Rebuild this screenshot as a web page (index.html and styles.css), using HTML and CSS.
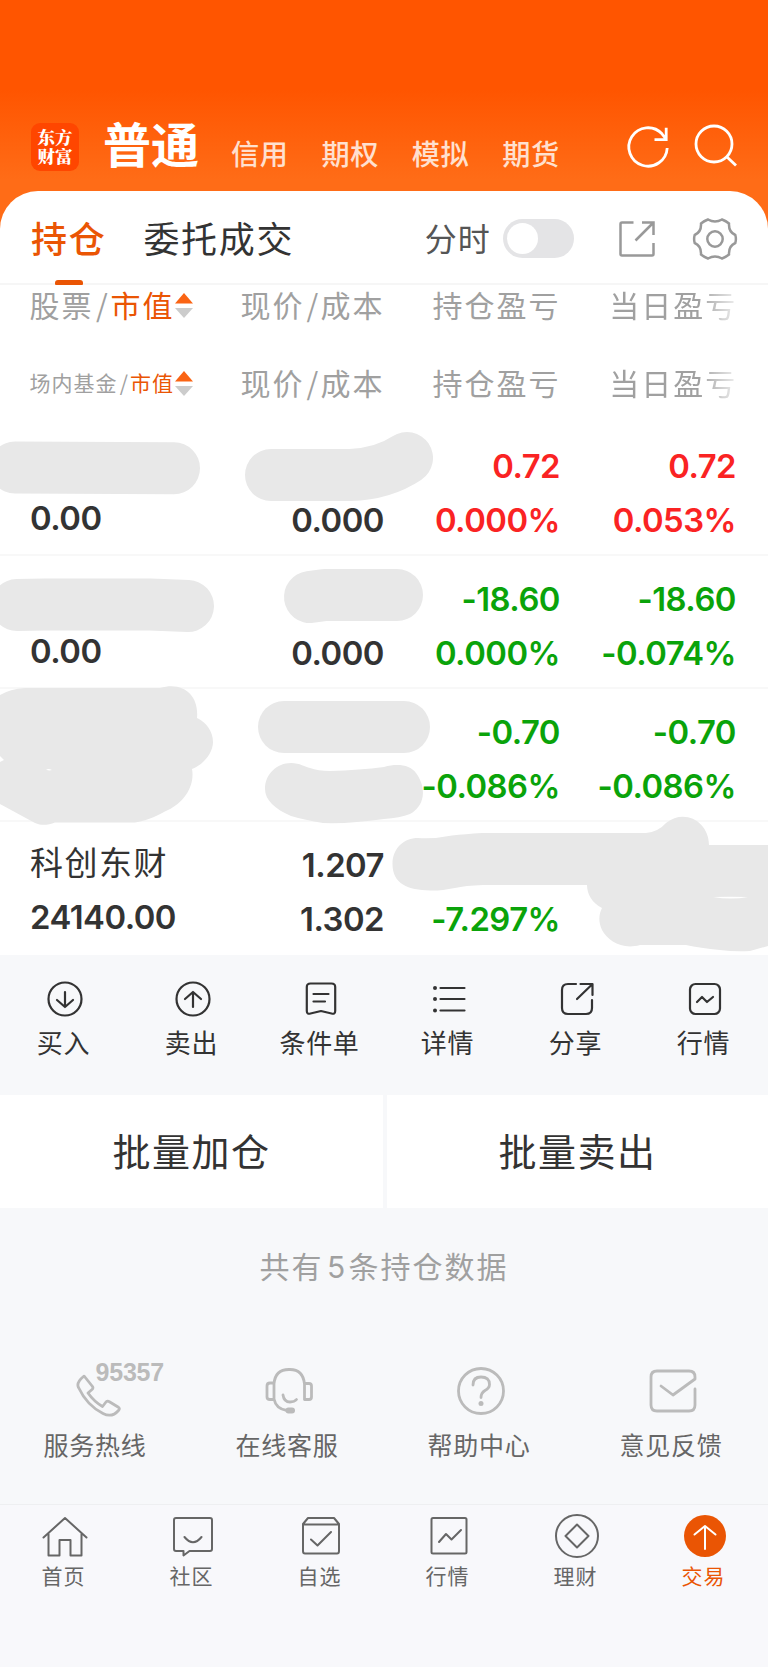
FILE: index.html
```html
<!DOCTYPE html>
<html lang="zh-CN">
<head>
<meta charset="utf-8">
<title>持仓</title>
<link rel="stylesheet" href="styles.css">
</head>
<body>
<div class="app">
  <header class="top">
    <div class="logo"><span>东方</span><span>财富</span></div>
    <h1 class="title">普通</h1>
    <nav class="modes"><span>信用</span><span>期权</span><span>模拟</span><span>期货</span></nav>
    <svg class="top-icon refresh" viewBox="-24 -24 48 48"><path d="M19.2 1A19.2 19.2 0 1 1 14-13.2L18-8M18.2-19.3V-7.3H6.5"/></svg>
    <svg class="top-icon" viewBox="-24 -24 48 48"><circle cx="-2" cy="-3" r="18"/><path d="M11 10L20 18.500"/></svg>
  </header>

  <main class="panel">
    <div class="tabs">
      <span class="tab active">持仓</span>
      <span class="tab">委托成交</span>
      <span class="tick-label">分时</span>
      <span class="switch"></span>
      <svg class="tool share" viewBox="-24 -24 48 48"><path d="M-3.500-16.500H-15Q-16.500-16.500-16.500-15V15Q-16.500 16.500-15 16.500H15Q16.500 16.500 16.500 15V4M5-16.500H16.500V-4M16-16L-1.500 1.500"/></svg>
      <svg class="tool" viewBox="-24 -24 48 48"><path d="M-7-19.500Q0-15.500 7-19.500Q11-18 14-15.500Q13.500-7 20.300-4Q21.500 0 20.300 4Q13.500 7 14 15.500Q11 18 7 19.500Q0 15.500-7 19.500Q-11 18-14 15.500Q-13.500 7-20.300 4Q-21.500 0-20.300-4Q-13.500-7-14-15.500Q-11-18-7-19.500Z"/><circle r="7.700"/></svg>
    </div>

    <div class="thead first">
      <div class="name-col">股票<i>/</i><b>市值</b><svg class="sort" viewBox="0 0 18 26"><path class="up" d="M9 0L18 10.500H0Z"/><path class="down" d="M9 25L18 15H0Z"/></svg></div>
      <div>现价<i>/</i>成本</div><div>持仓盈亏</div><div class="fade">当日盈亏</div>
    </div>
    <div class="thead second">
      <div class="name-col small">场内基金<i>/</i><b>市值</b><svg class="sort" viewBox="0 0 18 26"><path class="up" d="M9 0L18 10.500H0Z"/><path class="down" d="M9 25L18 15H0Z"/></svg></div>
      <div>现价<i>/</i>成本</div><div>持仓盈亏</div><div class="fade">当日盈亏</div>
    </div>

    <div class="holdings">
      <div class="row"><div class="name-col"><span></span><span>0.00</span></div><div><span></span><span>0.000</span></div><div class="rise"><span>0.72</span><span>0.000%</span></div><div class="rise"><span>0.72</span><span>0.053%</span></div></div>
      <div class="row"><div class="name-col"><span></span><span>0.00</span></div><div><span></span><span>0.000</span></div><div class="fall"><span>-18.60</span><span>0.000%</span></div><div class="fall"><span>-18.60</span><span>-0.074%</span></div></div>
      <div class="row"><div class="name-col"></div><div></div><div class="fall"><span>-0.70</span><span>-0.086%</span></div><div class="fall"><span>-0.70</span><span>-0.086%</span></div></div>
      <div class="row"><div class="name-col"><span class="stock">科创东财</span><span>24140.00</span></div><div><span>1.207</span><span>1.302</span></div><div class="fall"><span></span><span>-7.297%</span></div><div></div></div>
      <!-- Brush strokes hiding private figures -->
      <svg class="redact" viewBox="0 423 768 532">
        <g class="brush"><path d="M15 467.500L174 468.200"/><path d="M271 475H350Q383 474 407 458"/><path d="M17 605L45 604.500H150L188 606"/><path d="M310 597L325 595H397"/><path d="M284 727H404"/></g>
        <path d="M0 695Q10 689 25 688H160C185 681 199 697 197 718C206 722 213 731 213 742C213 753 203 765 192 769C195 785 185 802 168 810C158 815 150 820 135 822.500H55C48 825 42 826 35 823L0 804V762L4 760L0 756Z"/>
        <path d="M265 789C265 774 277 763 291 763C300 763 305 767 310 768Q318 771 330 771Q360 770 384 767C398 763 410 765 416 773C427 788 425 806 410 814Q400 818 384 819Q350 824 323 823Q305 820 291 816C275 809 265 800 265 789Z"/>
        <path d="M392.500 864C392.500 848 404 838 418 838Q435 839 452 835.500Q465 834 482 833H646Q658 832 666 823C685 808 709 822 709 845H768V946L750 951Q735 952 720 950Q700 948 686 945H640C622 950 608 941 602 930C598 921 599 914 602 908C592 903 587 894 587 885H483Q465 885.500 455 888Q440 891 430 890.500C408 890 392.500 884 392.500 864Z"/>
        <path class="gap" d="M713 897Q730 896.500 748 897Q731 900 713 897ZM46 769.500Q49 768.500 52 770Q49 771 46 769.500Z"/>
      </svg>
    </div>
  </main>

  <section class="actions">
    <div><svg viewBox="-20 -20 40 40"><circle r="16.500"/><path d="M0-7V8M-8 1L0 8L8 1"/></svg>买入</div>
    <div><svg viewBox="-20 -20 40 40"><circle r="16.500"/><path d="M0 8V-7M-8 0L0-7L8 0"/></svg>卖出</div>
    <div><svg viewBox="-20 -20 40 40"><path d="M-14.200 12V-12Q-14.200-15.500-10.500-15.500H10.500Q14.200-15.500 14.200-12V12Q14.200 15.500 10.500 14.500L0 12L-10.500 14.500Q-14.200 15.500-14.200 12ZM-7.500-5H7.500M-7.500 2.500H4"/></svg>条件单</div>
    <div><svg viewBox="-20 -20 40 40"><path d="M-8.500-11H15.500M-8.500 0H15.500M-8.500 11.500H15.500"/><path class="dots" d="M-14-11H-14M-14 0H-14M-14 11.500H-14"/></svg>详情</div>
    <div><svg viewBox="-20 -20 40 40"><path d="M-1-15H-9Q-15-15-15-9V9Q-15 15-9 15H9Q15 15 15 9V1M3.500-15H15.500V-4M15-14.500L0 0"/></svg>分享</div>
    <div><svg viewBox="-20 -20 40 40"><rect x="-15" y="-15" width="30" height="30" rx="5.500"/><path d="M-8 3L-3-2L2 3L8-2"/></svg>行情</div>
  </section>

  <section class="batch"><div>批量加仓</div><div>批量卖出</div></section>
  <p class="summary">共有<i>5</i>条持仓数据</p>

  <section class="services">
    <div><span class="icon-wrap"><svg viewBox="-30 -26 60 52"><path d="M-11.500-13L-3.500-3Q-2.500-1.500-4 0L-8 3.500Q-2 12 6.500 17L10 12.500Q11.500 11 13 12L22 17.500Q24.500 19 22.500 21Q16 28.500 7 24Q-9 16-17.500-2Q-20-7-12.500-13Q-12-13.500-11.500-13Z" transform="translate(-1 -1.500)"/></svg><em>95357</em></span>服务热线</div>
    <div><svg viewBox="-30 -26 60 52"><path d="M-15-8V-7Q-14-21.500 0-21.500H1Q14-21.500 15.500-7V8.500H20Q22.500 8.500 22.500 6V-5Q22.500-7.500 20-7.500H15.500M-15-8H-19Q-22-8-22-5V6Q-22 8.500-19 8.500H-15V-8M-15 8Q-13 18-2 19.500M-6 4Q-5 11 1 11Q5.500 11 7.500 8.500"/><path class="mic" d="M-.500 19.500H3"/></svg>在线客服</div>
    <div><svg viewBox="-30 -26 60 52"><circle r="22.500"/><path d="M-8-6Q-8-14 0-14Q8.500-14 8.500-6.500Q8.500-3 4-.500Q0 2 0 6.500"/><circle class="dot" cx="0" cy="12.500" r="2.500"/></svg>帮助中心</div>
    <div><svg viewBox="-30 -26 60 52"><path d="M22-2V14Q22 20 16 20H-16Q-22 20-22 14V-14Q-22-20-16-20H16Q22-20 22-14V-12L0 4L-12-5"/></svg>意见反馈</div>
  </section>

  <nav class="bottom">
    <div><svg viewBox="-24 -24 48 48"><path d="M-21.500 1.500L0-18L21.500 1.500M-16.500-2V19.500H-5.500V4H5.500V19.500H16.500V-2"/></svg>首页</div>
    <div><svg viewBox="-24 -24 48 48"><path d="M-17-18H17Q19-18 19-16V13Q19 15 17 15H-3.500L-9.500 19.500V15H-17Q-19 15-19 13V-16Q-19-18-17-18ZM-8.500 1Q0 11.500 8.500 1"/></svg>社区</div>
    <div><svg viewBox="-24 -24 48 48"><path d="M-18-12L-13-18H13L18-12V15Q18 17.500 16 17.500H-16Q-18 17.500-18 15ZM-18-11.500H18M-10 3.500L-3.500 9.500L10-4"/></svg>自选</div>
    <div><svg viewBox="-24 -24 48 48"><rect x="-17.500" y="-18" width="35" height="35.500" rx="1.500"/><path d="M-10 6L-3-2L2.500 3.500L12-6"/></svg>行情</div>
    <div><svg viewBox="-24 -24 48 48"><circle r="21"/><path d="M0-11.500L11.500 0L0 11.500L-11.500 0Z"/></svg>理财</div>
    <div class="current"><svg viewBox="-24 -24 48 48"><circle r="21"/><path d="M0 13V-9.500M-10.500-1.500L0-10L10.500-1.500"/></svg>交易</div>
  </nav>
</div>
</body>
</html>
```
FILE: styles.css
```css
* { box-sizing: border-box; }
body { margin: 0; background: #f7f8fa; font-family: "Noto Sans CJK SC", sans-serif; color: #333; }
i, em, b { font-style: normal; font-weight: inherit; }
svg { display: block; fill: none; }
.app { width: 768px; height: 1667px; display: flex; flex-direction: column; overflow: hidden; background: linear-gradient(#ff5500 0, #ff5500 90px, #ff6c17 180px, #ff6c17 240px, #f7f8fa 240px); }

.top { height: 191px; flex: none; display: flex; align-items: flex-start; padding: 123px 28.500px 0 31px; color: #fff; }
.logo { width: 48px; height: 48px; border-radius: 9px; background: #ff4600; display: flex; flex-direction: column; padding: 4px 0 0 6.500px; font-size: 17.500px; line-height: 19px; font-family: "Noto Serif CJK SC", "Noto Sans CJK SC", serif; font-weight: 900; }
.title { margin: -13px 0 0 24px; font-size: 48px; line-height: 65px; font-weight: 700; }
.modes { display: flex; gap: 32.800px; margin: 8px 0 0 32px; font-size: 28.200px; letter-spacing: .600px; line-height: 44px; font-weight: 500; color: #ffe0cf; }
.top-icon { width: 48px; height: 48px; stroke: #fff; stroke-width: 2.800; margin-left: 20px; }
.refresh { margin-left: auto; }

.panel { flex: none; background: #fff; border-radius: 38px 38px 0 0; }
.tabs { height: 94px; display: flex; align-items: flex-start; padding: 0 27.500px 0 31px; border-bottom: 2px solid #f6f6f6; }
.tab { position: relative; font-size: 36px; letter-spacing: 1.700px; line-height: 92px; margin-right: 37px; }
.tab.active { color: #ea5504; font-weight: 500; }
.tab.active::after { content: ""; position: absolute; left: 24px; top: 88.500px; width: 27.500px; height: 5.500px; border-radius: 3px 3px 1px 1px; background: #ea5504; }
.tick-label { margin-left: 93.500px; font-size: 32px; letter-spacing: 1px; line-height: 93px; color: #555; }
.switch { width: 71px; height: 39px; border-radius: 20px; background: #e4e4e6; margin: 28px 0 0 12px; padding: 4px; }
.switch::before { content: ""; display: block; width: 31px; height: 31px; border-radius: 50%; background: #fff; }
.tool { width: 48px; height: 48px; margin: 23.500px 0 0 30px; stroke: #999; stroke-width: 2.500; }
.share { margin-left: 39px; }

.thead, .row { display: grid; grid-template-columns: 170px 184px 176px 176px; padding: 0 32px 0 30px; text-align: right; }
.thead { font-size: 30px; letter-spacing: 2px; color: #a0a0a0; white-space: nowrap; font-weight: 400; }
.thead > div { position: relative; left: .500px; }
.thead .fade { left: 1.200px; }
.thead i { display: inline-block; width: 16px; text-align: center; letter-spacing: 0; }
.thead .name-col { display: flex; align-items: center; left: -.500px; }
.thead .name-col i { width: 17px; }
.thead b { color: #ea5504; }
.first { height: 60px; line-height: 38px; align-items: start; }
.second { height: 78px; line-height: 74px; align-items: start; }
.small { font-size: 21px; letter-spacing: 1px; }
.thead .small i { width: 12.500px; }
.sort { width: 18px; height: 26px; position: relative; top: 1.500px; left: .500px; }
.sort .up { fill: #fa6414; }
.sort .down { fill: #ccc; }
.fade { -webkit-mask-image: linear-gradient(90deg, #000 78%, rgba(0,0,0,.2) 99%); mask-image: linear-gradient(90deg, #000 78%, rgba(0,0,0,.2) 99%); }

.holdings { position: relative; height: 532px; font-family: "Inter", "Noto Sans CJK SC", sans-serif; font-size: 32.800px; font-weight: 600; letter-spacing: -.500px; }
.row { height: 133px; border-bottom: 2px solid #f8f8f8; }
.row:nth-child(4) { border: 0; }
.row span { display: block; height: 54px; line-height: 54px; }
.row > div { padding-top: 15.500px; }
.row .name-col { text-align: left; }
.row .name-col span:last-child { margin-top: -2px; }
.row .stock { font-family: "Noto Sans CJK SC", sans-serif; font-size: 33px; font-weight: 400; letter-spacing: 1.500px; line-height: 47px; }
.rise { color: #fa2323; }
.fall { color: #0aa30a; }
.redact { position: absolute; left: 0; top: 0; width: 768px; height: 532px; fill: #e8e8e8; }
.brush { fill: none; stroke: #e8e8e8; stroke-width: 52; stroke-linecap: round; stroke-linejoin: round; }
.gap { fill: #fff; }

.actions { flex: none; height: 140px; background: #f7f8fa; display: grid; grid-template-columns: repeat(6, 1fr); padding-top: 24px; text-align: center; font-size: 26px; letter-spacing: .700px; line-height: 46px; }
.actions > div { padding-right: 1px; }
.actions svg { width: 40px; height: 40px; margin: 0 auto; stroke: #333; stroke-width: 2.200; stroke-linecap: round; stroke-linejoin: round; position: relative; left: 1px; }
.actions .dots { stroke-width: 4; }
.batch { flex: none; height: 113px; display: grid; grid-template-columns: 383px 381px; gap: 4px; background: #f7f8fa; font-size: 38px; letter-spacing: 1.500px; line-height: 110px; text-align: center; }
.batch div { background: #fff; }
.summary { flex: none; height: 147px; margin: 0; background: #f7f8fa; text-align: center; font-size: 30px; letter-spacing: 2px; line-height: 115px; color: #a0a0a0; }
.summary i { display: inline-block; width: 25px; font-size: 30px; letter-spacing: 0; font-family: "Inter", sans-serif; }
.services { flex: none; height: 149px; background: #f7f8fa; display: grid; grid-template-columns: repeat(4, 1fr); padding-top: 10px; text-align: center; font-size: 25px; letter-spacing: .700px; line-height: 55px; color: #666; }
.services > div { padding-right: 2px; }
.services svg { width: 60px; height: 52px; margin: 0 auto; stroke: #bbb; stroke-width: 2.800; stroke-linecap: round; stroke-linejoin: round; position: relative; left: 1.500px; }
.services .mic { stroke-width: 6; }
.services .dot { fill: #bbb; stroke: none; }
.icon-wrap { display: block; position: relative; }
.icon-wrap em { position: absolute; left: 95.500px; top: -3px; font: bold 25px/20px "Liberation Sans", sans-serif; letter-spacing: -.200px; color: #bbb; }
.bottom { flex: 1; background: #f8f8fb; border-top: 1px solid #eeeff1; display: grid; grid-template-columns: repeat(6, 1fr); grid-template-rows: max-content; padding-top: 7px; text-align: center; font-size: 21px; letter-spacing: 1px; line-height: 30px; color: #666; }
.bottom svg { width: 48px; height: 48px; margin: 0 auto; stroke: #666; stroke-width: 2; stroke-linejoin: round; stroke-linecap: round; position: relative; left: 1px; }
.bottom > div { padding-right: 1px; }
.bottom .current { color: #ea5504; }
.current circle { fill: #ea5504; stroke: none; }
.current path { stroke: #fff; }
```
